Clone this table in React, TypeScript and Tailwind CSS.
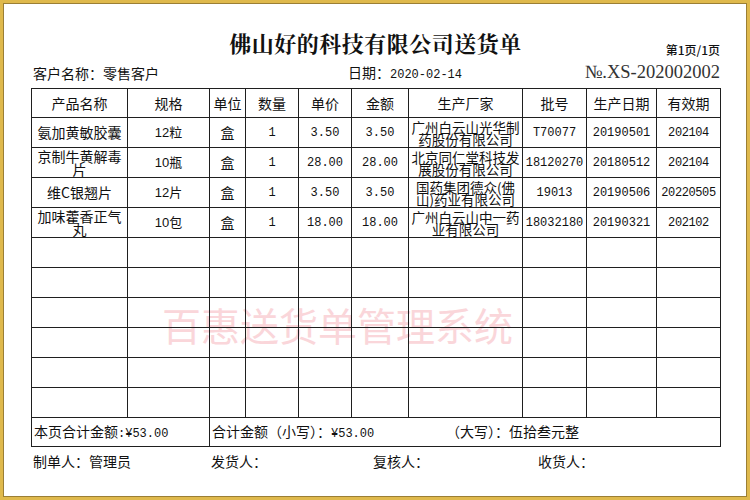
import React from "react";

const items = [
  {
    name: "氨加黄敏胶囊",
    spec: "12粒",
    unit: "盒",
    qty: "1",
    price: "3.50",
    amount: "3.50",
    maker: "广州白云山光华制药股份有限公司",
    batch: "T70077",
    made: "20190501",
    expire: "202104",
  },
  {
    name: "京制牛黄解毒片",
    spec: "10瓶",
    unit: "盒",
    qty: "1",
    price: "28.00",
    amount: "28.00",
    maker: "北京同仁堂科技发展股份有限公司",
    batch: "18120270",
    made: "20180512",
    expire: "202104",
  },
  {
    name: "维C银翘片",
    spec: "12片",
    unit: "盒",
    qty: "1",
    price: "3.50",
    amount: "3.50",
    maker: "国药集团德众(佛山)药业有限公司",
    batch: "19013",
    made: "20190506",
    expire: "20220505",
  },
  {
    name: "加味藿香正气丸",
    spec: "10包",
    unit: "盒",
    qty: "1",
    price: "18.00",
    amount: "18.00",
    maker: "广州白云山中一药业有限公司",
    batch: "18032180",
    made: "20190321",
    expire: "202102",
  },
];

const headers = ["产品名称", "规格", "单位", "数量", "单价", "金额", "生产厂家", "批号", "生产日期", "有效期"];
const widths = [96, 82, 36, 53, 53, 57, 114, 64, 70, 64];

const cell = "border border-[#1f1f1f] text-center align-middle p-0";
const mono = "font-['Liberation_Mono','Noto_Sans_CJK_SC',monospace] text-[12px]";

export default function App() {
  return (
    <div className="w-[750px] h-[500px] border-[3px] border-[#dfb94c] bg-white">
      <div className="h-full border border-[#9b7f35] pt-[23px] pl-[27px] pr-[26px] font-['Noto_Sans_CJK_SC',sans-serif] text-[#111]">
        {/* title */}
        <div className="grid grid-cols-[1fr_auto_1fr] h-[31px]">
          <div />
          <h1 className="text-[22px] leading-[31px] font-bold font-['Noto_Serif_CJK_SC','Noto_Sans_CJK_SC',serif] tracking-[0.5px]">
            佛山好的科技有限公司送货单
          </h1>
          <div className="self-end justify-self-end text-[12px] leading-[16px] font-medium">第1页/1页</div>
        </div>

        <div className="flex items-center h-[30px] text-[14px]">
          <div className="w-[317px] pl-[2px]">客户名称：零售客户</div>
          <div>
            日期：<span className="font-['Liberation_Mono',monospace] text-[12px]">2020-02-14</span>
          </div>
          <div className="ml-auto font-['Liberation_Serif',serif] text-[18.5px] text-[#333]">№.XS-202002002</div>
        </div>

        <div className="relative">
          <div className="absolute left-[131px] top-[214px] text-[39px] leading-[44px] text-[#fad6da] whitespace-nowrap pointer-events-none">
            百惠送货单管理系统
          </div>
          <table className="relative border-collapse table-fixed w-[689px] text-[14px]">
            <colgroup>
              {widths.map((w, i) => (
                <col key={i} style={{ width: w }} />
              ))}
            </colgroup>
            <tbody>
              <tr className="h-[29px]">
                {headers.map((h) => (
                  <td key={h} className={cell}>
                    {h}
                  </td>
                ))}
              </tr>
              {items.map((it) => (
                <tr key={it.name} className="h-[30px]">
                  <td className={`${cell} leading-[13px] px-[2px]`}>{it.name}</td>
                  <td className={`${cell} font-['Liberation_Sans','Noto_Sans_CJK_SC',sans-serif] text-[13px]`}>{it.spec}</td>
                  <td className={cell}>{it.unit}</td>
                  <td className={`${cell} ${mono}`}>{it.qty}</td>
                  <td className={`${cell} ${mono}`}>{it.price}</td>
                  <td className={`${cell} ${mono}`}>{it.amount}</td>
                  <td className={`${cell} text-[13.5px] leading-[12px] px-[1px]`}>{it.maker}</td>
                  <td className={`${cell} ${mono}`}>{it.batch}</td>
                  <td className={`${cell} ${mono}`}>{it.made}</td>
                  <td className={`${cell} ${mono} tracking-[-0.4px]`}>{it.expire}</td>
                </tr>
              ))}
              {Array.from({ length: 6 }).map((_, r) => (
                <tr key={r} className="h-[30px]">
                  {widths.map((_, i) => (
                    <td key={i} className={cell} />
                  ))}
                </tr>
              ))}
              <tr className="h-[29px]">
                <td colSpan={2} className={`${cell} text-left pl-[2px]`}>
                  本页合计金额<span className="font-['Liberation_Mono',monospace] text-[12px]">:¥53.00</span>
                </td>
                <td colSpan={8} className={`${cell} text-left pl-[2px]`}>
                  <div className="flex">
                    <span className="w-[234px]">
                      合计金额（小写）：<span className="font-['Liberation_Mono',monospace] text-[12px]">¥53.00</span>
                    </span>
                    <span>（大写）：伍拾叁元整</span>
                  </div>
                </td>
              </tr>
            </tbody>
          </table>
        </div>

        <div className="flex items-center h-[28px] text-[14px] pl-[2px]">
          <div className="w-[178px]">制单人：管理员</div>
          <div className="w-[162px]">发货人：</div>
          <div className="w-[165px]">复核人：</div>
          <div>收货人：</div>
        </div>
      </div>
    </div>
  );
}
